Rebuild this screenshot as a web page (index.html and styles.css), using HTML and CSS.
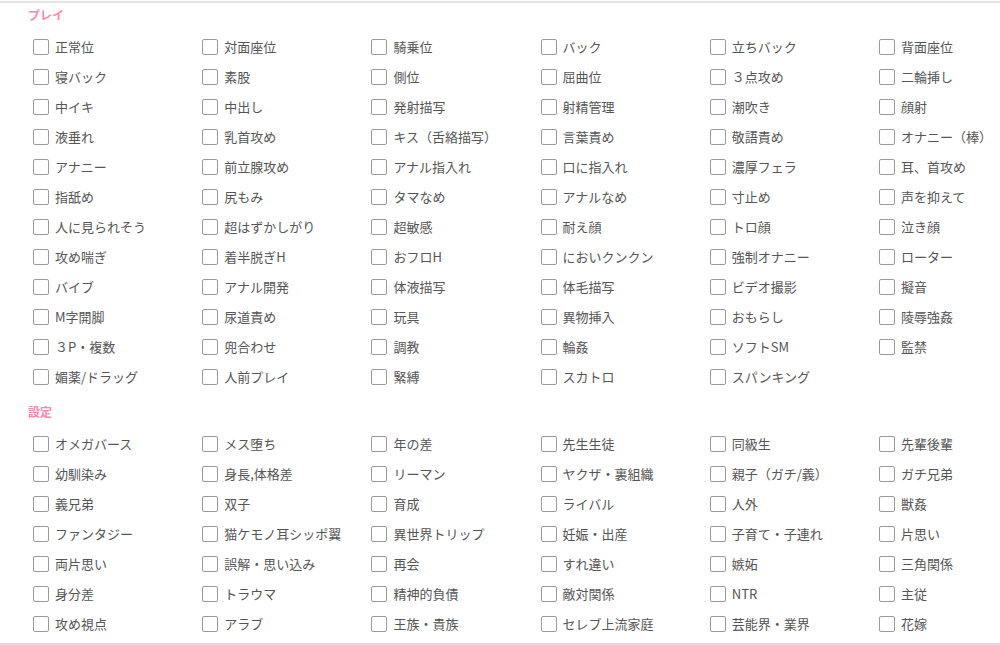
FILE: index.html
```html
<!DOCTYPE html>
<html lang="ja">
<head>
    <meta charset="UTF-8">
    <meta name="viewport" content="width=device-width, initial-scale=1.0">
    <title>プレイ・設定</title>
    <link rel="stylesheet" href="styles.css">
</head>
<body>
    <div class="panel">
        <h3 class="sec-title">プレイ</h3>
        <div class="tags">
            <label class="tag"><input type="checkbox"><span>正常位</span></label>
            <label class="tag"><input type="checkbox"><span>対面座位</span></label>
            <label class="tag"><input type="checkbox"><span>騎乗位</span></label>
            <label class="tag"><input type="checkbox"><span>バック</span></label>
            <label class="tag"><input type="checkbox"><span>立ちバック</span></label>
            <label class="tag"><input type="checkbox"><span>背面座位</span></label>
            <label class="tag"><input type="checkbox"><span>寝バック</span></label>
            <label class="tag"><input type="checkbox"><span>素股</span></label>
            <label class="tag"><input type="checkbox"><span>側位</span></label>
            <label class="tag"><input type="checkbox"><span>屈曲位</span></label>
            <label class="tag"><input type="checkbox"><span>３点攻め</span></label>
            <label class="tag"><input type="checkbox"><span>二輪挿し</span></label>
            <label class="tag"><input type="checkbox"><span>中イキ</span></label>
            <label class="tag"><input type="checkbox"><span>中出し</span></label>
            <label class="tag"><input type="checkbox"><span>発射描写</span></label>
            <label class="tag"><input type="checkbox"><span>射精管理</span></label>
            <label class="tag"><input type="checkbox"><span>潮吹き</span></label>
            <label class="tag"><input type="checkbox"><span>顔射</span></label>
            <label class="tag"><input type="checkbox"><span>液垂れ</span></label>
            <label class="tag"><input type="checkbox"><span>乳首攻め</span></label>
            <label class="tag"><input type="checkbox"><span>キス（舌絡描写）</span></label>
            <label class="tag"><input type="checkbox"><span>言葉責め</span></label>
            <label class="tag"><input type="checkbox"><span>敬語責め</span></label>
            <label class="tag"><input type="checkbox"><span>オナニー（棒）</span></label>
            <label class="tag"><input type="checkbox"><span>アナニー</span></label>
            <label class="tag"><input type="checkbox"><span>前立腺攻め</span></label>
            <label class="tag"><input type="checkbox"><span>アナル指入れ</span></label>
            <label class="tag"><input type="checkbox"><span>口に指入れ</span></label>
            <label class="tag"><input type="checkbox"><span>濃厚フェラ</span></label>
            <label class="tag"><input type="checkbox"><span>耳、首攻め</span></label>
            <label class="tag"><input type="checkbox"><span>指舐め</span></label>
            <label class="tag"><input type="checkbox"><span>尻もみ</span></label>
            <label class="tag"><input type="checkbox"><span>タマなめ</span></label>
            <label class="tag"><input type="checkbox"><span>アナルなめ</span></label>
            <label class="tag"><input type="checkbox"><span>寸止め</span></label>
            <label class="tag"><input type="checkbox"><span>声を抑えて</span></label>
            <label class="tag"><input type="checkbox"><span>人に見られそう</span></label>
            <label class="tag"><input type="checkbox"><span>超はずかしがり</span></label>
            <label class="tag"><input type="checkbox"><span>超敏感</span></label>
            <label class="tag"><input type="checkbox"><span>耐え顔</span></label>
            <label class="tag"><input type="checkbox"><span>トロ顔</span></label>
            <label class="tag"><input type="checkbox"><span>泣き顔</span></label>
            <label class="tag"><input type="checkbox"><span>攻め喘ぎ</span></label>
            <label class="tag"><input type="checkbox"><span>着半脱ぎH</span></label>
            <label class="tag"><input type="checkbox"><span>おフロH</span></label>
            <label class="tag"><input type="checkbox"><span>においクンクン</span></label>
            <label class="tag"><input type="checkbox"><span>強制オナニー</span></label>
            <label class="tag"><input type="checkbox"><span>ローター</span></label>
            <label class="tag"><input type="checkbox"><span>バイブ</span></label>
            <label class="tag"><input type="checkbox"><span>アナル開発</span></label>
            <label class="tag"><input type="checkbox"><span>体液描写</span></label>
            <label class="tag"><input type="checkbox"><span>体毛描写</span></label>
            <label class="tag"><input type="checkbox"><span>ビデオ撮影</span></label>
            <label class="tag"><input type="checkbox"><span>擬音</span></label>
            <label class="tag"><input type="checkbox"><span>M字開脚</span></label>
            <label class="tag"><input type="checkbox"><span>尿道責め</span></label>
            <label class="tag"><input type="checkbox"><span>玩具</span></label>
            <label class="tag"><input type="checkbox"><span>異物挿入</span></label>
            <label class="tag"><input type="checkbox"><span>おもらし</span></label>
            <label class="tag"><input type="checkbox"><span>陵辱強姦</span></label>
            <label class="tag"><input type="checkbox"><span>３P・複数</span></label>
            <label class="tag"><input type="checkbox"><span>兜合わせ</span></label>
            <label class="tag"><input type="checkbox"><span>調教</span></label>
            <label class="tag"><input type="checkbox"><span>輪姦</span></label>
            <label class="tag"><input type="checkbox"><span>ソフトSM</span></label>
            <label class="tag"><input type="checkbox"><span>監禁</span></label>
            <label class="tag"><input type="checkbox"><span>媚薬/ドラッグ</span></label>
            <label class="tag"><input type="checkbox"><span>人前プレイ</span></label>
            <label class="tag"><input type="checkbox"><span>緊縛</span></label>
            <label class="tag"><input type="checkbox"><span>スカトロ</span></label>
            <label class="tag"><input type="checkbox"><span>スパンキング</span></label>
        </div>

        <h3 class="sec-title">設定</h3>
        <div class="tags">
            <label class="tag"><input type="checkbox"><span>オメガバース</span></label>
            <label class="tag"><input type="checkbox"><span>メス堕ち</span></label>
            <label class="tag"><input type="checkbox"><span>年の差</span></label>
            <label class="tag"><input type="checkbox"><span>先生生徒</span></label>
            <label class="tag"><input type="checkbox"><span>同級生</span></label>
            <label class="tag"><input type="checkbox"><span>先輩後輩</span></label>
            <label class="tag"><input type="checkbox"><span>幼馴染み</span></label>
            <label class="tag"><input type="checkbox"><span>身長,体格差</span></label>
            <label class="tag"><input type="checkbox"><span>リーマン</span></label>
            <label class="tag"><input type="checkbox"><span>ヤクザ・裏組織</span></label>
            <label class="tag"><input type="checkbox"><span>親子（ガチ/義）</span></label>
            <label class="tag"><input type="checkbox"><span>ガチ兄弟</span></label>
            <label class="tag"><input type="checkbox"><span>義兄弟</span></label>
            <label class="tag"><input type="checkbox"><span>双子</span></label>
            <label class="tag"><input type="checkbox"><span>育成</span></label>
            <label class="tag"><input type="checkbox"><span>ライバル</span></label>
            <label class="tag"><input type="checkbox"><span>人外</span></label>
            <label class="tag"><input type="checkbox"><span>獣姦</span></label>
            <label class="tag"><input type="checkbox"><span>ファンタジー</span></label>
            <label class="tag"><input type="checkbox"><span>猫ケモノ耳シッポ翼</span></label>
            <label class="tag"><input type="checkbox"><span>異世界トリップ</span></label>
            <label class="tag"><input type="checkbox"><span>妊娠・出産</span></label>
            <label class="tag"><input type="checkbox"><span>子育て・子連れ</span></label>
            <label class="tag"><input type="checkbox"><span>片思い</span></label>
            <label class="tag"><input type="checkbox"><span>両片思い</span></label>
            <label class="tag"><input type="checkbox"><span>誤解・思い込み</span></label>
            <label class="tag"><input type="checkbox"><span>再会</span></label>
            <label class="tag"><input type="checkbox"><span>すれ違い</span></label>
            <label class="tag"><input type="checkbox"><span>嫉妬</span></label>
            <label class="tag"><input type="checkbox"><span>三角関係</span></label>
            <label class="tag"><input type="checkbox"><span>身分差</span></label>
            <label class="tag"><input type="checkbox"><span>トラウマ</span></label>
            <label class="tag"><input type="checkbox"><span>精神的負債</span></label>
            <label class="tag"><input type="checkbox"><span>敵対関係</span></label>
            <label class="tag"><input type="checkbox"><span>NTR</span></label>
            <label class="tag"><input type="checkbox"><span>主従</span></label>
            <label class="tag"><input type="checkbox"><span>攻め視点</span></label>
            <label class="tag"><input type="checkbox"><span>アラブ</span></label>
            <label class="tag"><input type="checkbox"><span>王族・貴族</span></label>
            <label class="tag"><input type="checkbox"><span>セレブ上流家庭</span></label>
            <label class="tag"><input type="checkbox"><span>芸能界・業界</span></label>
            <label class="tag"><input type="checkbox"><span>花嫁</span></label>
        </div>
    </div>
</body>
</html>
```

FILE: styles.css
```css
html, body { margin: 0; padding: 0; background: #fff; }
body { font-family: "Noto Sans CJK JP", "Noto Sans", sans-serif; color: #555; font-size: 13px; }
.panel { margin-top: 1px; border-top: 2px solid #e4e4e4; border-bottom: 2px solid #dcdcdc; padding: 4px 0 4px 26px; }
.sec-title { margin: 0 0 9px 2px; font-size: 12px; line-height: 16px; font-weight: bold; color: #ff86ad; }
.tags { display: grid; grid-template-columns: repeat(5, 169.2px) 1fr; margin-bottom: 12px; }
.tags:last-child { margin-bottom: 0; }
.tag { display: flex; align-items: center; height: 30px; padding-left: 7px; gap: 6px; white-space: nowrap; cursor: pointer; }
.tag input { appearance: none; -webkit-appearance: none; margin: 0; width: 16px; height: 16px; border: 1px solid #9a9a9a; border-radius: 2px; background: #fff; box-sizing: border-box; flex: none; }
.tag input:checked { background: #ff86ad; border-color: #ff86ad; }
.tag span { line-height: 16px; }
```
